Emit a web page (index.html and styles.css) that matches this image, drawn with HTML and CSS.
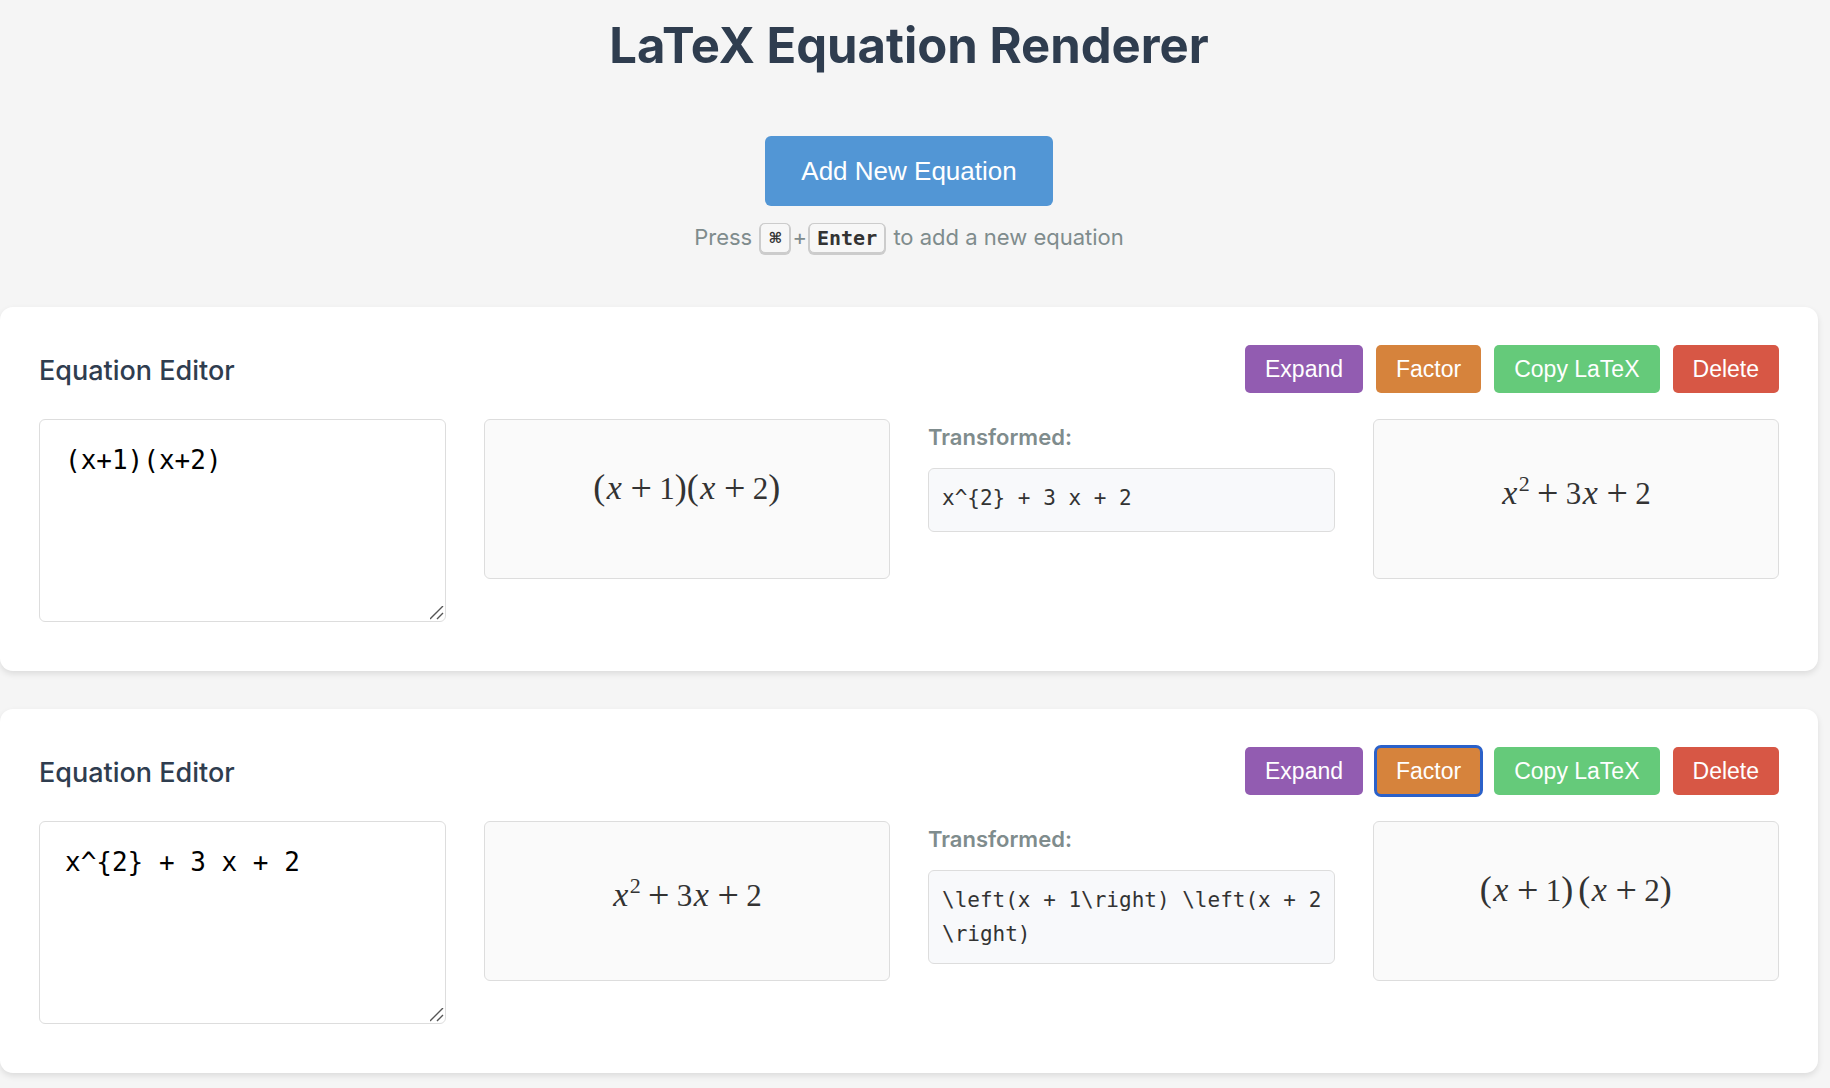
FILE: index.html
```html
<!DOCTYPE html>
<html lang="en">
<head>
<meta charset="utf-8">
<meta name="viewport" content="width=device-width, initial-scale=1">
<title>LaTeX Equation Renderer</title>
<link rel="stylesheet" href="styles.css">
</head>
<body>
<main class="page">
  <h1 class="title">LaTeX Equation Renderer</h1>

  <div class="toolbar">
    <button type="button" class="add">Add New Equation</button>
    <p class="hint">Press <kbd class="key">⌘</kbd>+<kbd class="key">Enter</kbd> to add a new equation</p>
  </div>

  <div class="cards">
    <section class="card">
      <header class="card-header">
        <h2 class="card-title"><label for="eq-1">Equation Editor</label></h2>
        <div class="actions">
          <button type="button" class="btn btn-expand">Expand</button>
          <button type="button" class="btn btn-factor">Factor</button>
          <button type="button" class="btn btn-copy">Copy LaTeX</button>
          <button type="button" class="btn btn-delete">Delete</button>
        </div>
      </header>
      <div class="columns">
        <textarea id="eq-1" class="source" spellcheck="false">(x+1)(x+2)</textarea>
        <div class="preview"><span class="paren">(</span><i class="var">x</i><span class="op">+</span>1<span class="paren">)</span><span class="paren">(</span><i class="var">x</i><span class="op">+</span>2<span class="paren">)</span></div>
        <div class="result">
          <h3 class="result-label">Transformed:</h3>
          <code class="result-code">x^{2} + 3 x + 2</code>
        </div>
        <div class="preview"><i class="var">x</i><sup class="power">2</sup><span class="op">+</span>3<i class="var">x</i><span class="op">+</span>2</div>
      </div>
    </section>

    <section class="card">
      <header class="card-header">
        <h2 class="card-title"><label for="eq-2">Equation Editor</label></h2>
        <div class="actions">
          <button type="button" class="btn btn-expand">Expand</button>
          <button type="button" class="btn btn-factor is-focused">Factor</button>
          <button type="button" class="btn btn-copy">Copy LaTeX</button>
          <button type="button" class="btn btn-delete">Delete</button>
        </div>
      </header>
      <div class="columns">
        <textarea id="eq-2" class="source" spellcheck="false">x^{2} + 3 x + 2</textarea>
        <div class="preview"><i class="var">x</i><sup class="power">2</sup><span class="op">+</span>3<i class="var">x</i><span class="op">+</span>2</div>
        <div class="result">
          <h3 class="result-label">Transformed:</h3>
          <code class="result-code">\left(x + 1\right) \left(x + 2<wbr>\right)</code>
        </div>
        <div class="preview"><span class="group"><span class="paren">(</span><i class="var">x</i><span class="op">+</span>1<span class="paren">)</span></span><span class="group"><span class="paren">(</span><i class="var">x</i><span class="op">+</span>2<span class="paren">)</span></span></div>
      </div>
    </section>
  </div>
</main>
</body>
</html>
```
FILE: styles.css
```css
* {
  box-sizing: border-box;
}

body {
  margin: 0;
  background: #f5f5f5;
  color: #333;
  font-family: Inter, "Liberation Sans", sans-serif;
}

.page {
  padding: 15px 12px 14px 0;
}

.title {
  margin: 0 0 59px;
  color: #2f3d4f;
  font-size: 49px;
  line-height: 62px;
  font-weight: 700;
  text-align: center;
}

.toolbar {
  display: flex;
  flex-direction: column;
  align-items: center;
  gap: 13px;
  margin-bottom: 51px;
}

.add {
  padding: 20px 36px;
  border: 0;
  border-radius: 6px;
  background: #5296d5;
  color: #fff;
  font: 26px/30px "Liberation Sans", Arial, sans-serif;
}

.hint {
  margin: 0;
  color: #7f8c8d;
  font-size: 22px;
  line-height: 37px;
}

.key {
  display: inline-block;
  min-width: 30px;
  margin: 0 2px;
  padding: 3px 7px;
  border: 1px solid #ccc;
  border-radius: 5px;
  box-shadow: 0 1px 0 1px #ccc;
  background: #f7f7f7;
  color: #333;
  font: bold 20px/22px "DejaVu Sans Mono", monospace;
  text-align: center;
}

.cards {
  display: grid;
  gap: 38px;
}

.card {
  padding: 38px 39px 49px;
  border-radius: 13px;
  background: #fff;
  box-shadow: 0 3px 6px rgba(0, 0, 0, 0.1);
}

.card-header {
  display: flex;
  justify-content: space-between;
  align-items: flex-end;
  margin-bottom: 26px;
}

.card-title {
  margin: 0;
  color: #2f3d4f;
  font-size: 27px;
  line-height: 44px;
  font-weight: 500;
}

.actions {
  display: flex;
  gap: 13px;
}

.btn {
  padding: 11px 20px;
  border: 0;
  border-radius: 5px;
  color: #fff;
  font: 23px/26px "Liberation Sans", Arial, sans-serif;
}

.btn-expand {
  background: #925cb1;
}

.btn-factor {
  background: #d6833c;
}

.btn-copy {
  background: #65ca7a;
}

.btn-delete {
  background: #d75745;
}

.btn.is-focused {
  outline: 3px solid #2b61c9;
  outline-offset: -1px;
}

.columns {
  display: grid;
  grid-template-columns: repeat(4, minmax(0, 1fr));
  align-items: start;
  gap: 38px;
}

.source {
  display: block;
  width: 100%;
  height: 203px;
  padding: 25px;
  border: 1px solid #ddd;
  border-radius: 6px;
  background: #fff;
  color: #000;
  font: 26px/30px "DejaVu Sans Mono", monospace;
  resize: vertical;
}

.source::-webkit-resizer {
  background: url("data:image/svg+xml,%3Csvg xmlns='http://www.w3.org/2000/svg' width='15' height='15'%3E%3Cpath d='M0 13L13 0M7 13L13 7' stroke='%23555' stroke-width='1.4' fill='none'/%3E%3C/svg%3E") no-repeat;
}

.preview {
  min-height: 160px;
  padding: 48px 26px 46px;
  border: 1px solid #ddd;
  border-radius: 6px;
  background: #fafafa;
  font: 31px/38px "Liberation Serif", "Times New Roman", serif;
  text-align: center;
}

.var {
  display: inline-block;
  width: 18px;
  font-size: 34px;
}

.op {
  display: inline-block;
  width: 24px;
  margin: 0 6px;
  font-size: 38px;
  line-height: 32px;
  vertical-align: -2px;
}

.paren {
  font-size: 36px;
}

.power {
  font-size: 22px;
  line-height: 31px;
  vertical-align: 13px;
}

.group + .group {
  margin-left: 5px;
}

.result-label {
  margin: 0 0 13px;
  color: #7f8c8d;
  font-size: 22px;
  line-height: 36px;
  font-weight: 600;
}

.result-code {
  display: block;
  min-height: 64px;
  padding: 12px 11px 12px 13px;
  border: 1px solid #ddd;
  border-radius: 6px;
  background: #f8f9fb;
  font: 21px/34px "DejaVu Sans Mono", monospace;
}
```
